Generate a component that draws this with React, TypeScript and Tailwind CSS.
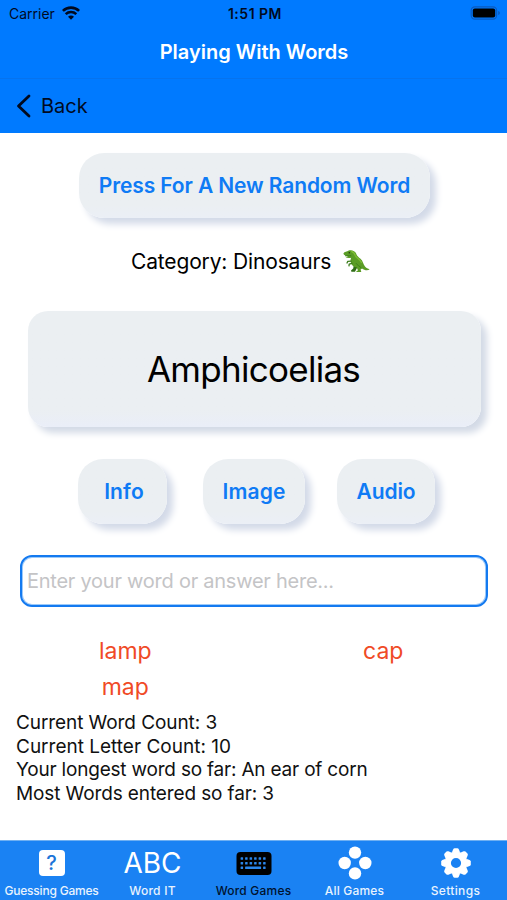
import type { ReactNode } from "react";

function WifiIcon() {
  return (
    <svg className="mb-[2px]" width="18" height="14" viewBox="0 0 18 14" fill="none" stroke="#000a1f" strokeWidth="2.6">
      <path d="M0.9 4.9C5.4 0.5 12.6 0.5 17.1 4.9" />
      <path d="M3.7 8.1C6.7 5.3 11.3 5.3 14.3 8.1" />
      <path d="M9 13.8 6 10.8C7.8 9.200 10.200 9.200 12 10.800Z" fill="#000a1f" stroke="none" />
    </svg>
  );
}

function BatteryIcon() {
  return (
    <svg className="mb-[2px]" width="31" height="14" viewBox="0 0 31 14">
      <rect x="1.2" y="0.8" width="25.4" height="12.4" rx="3.6" fill="none" stroke="#0a5bc0" strokeWidth="1.2" />
      <rect x="2.8" y="2.500" width="22.4" height="9" rx="2" fill="#000" />
      <path d="M28.200 5v4c1.100-.4 1.700-1.100 1.700-2s-.6-1.600-1.700-2Z" fill="#0a5bc0" />
    </svg>
  );
}

function TrexIcon() {
  return (
    <svg width="27" height="23" viewBox="0 0 27 23">
      <path d="M11 14.500 10.200 18.500 8 20.600 8.400 21.800H12L14.500 17Z" fill="#2f6d16" />
      <path
        d="M0.400 3.400C1.400 1.400 4 1.700 5.800 0.500C8.500-0.300 12.400 1 13.200 3.800C14 6 15.500 7.200 17.500 8.700C20 10.700 20.300 14.500 22 16.600C23.200 18.200 24.800 18.900 26.700 19.200C25 20.700 21.500 20.400 19 18.400L17.600 19.400 18.300 22H13.300L13.600 20.900 15 20.400 13.600 17.200C11.200 17.300 8.600 15.300 7.800 12.400C7.200 10.200 7.600 9 8.200 7.800C6 8.400 4 8.100 2.600 7.300L5.200 6.300C3.200 6.200 1 5.400 0.400 3.400Z"
        fill="#5a9c25"
      />
      <path d="M8.600 1.500C11 2 11.800 4 12.300 5.700C13.500 8.200 17 9 18.500 12.500" fill="none" stroke="#7dbb35" strokeWidth="1.300" strokeLinecap="round" />
      <path d="M8 11.200 4.800 11.400 4 13M9 13.300 6.200 14.200 6 15.800" fill="none" stroke="#3b7d1b" strokeWidth="1.300" strokeLinecap="round" strokeLinejoin="round" />
      <path d="M13.200 13.500C14.500 15.500 16.500 16 18 17.600M2.500 5.800 7.800 5.700" fill="none" stroke="#3b7d1b" strokeWidth="0.900" strokeLinecap="round" />
      <circle cx="6.300" cy="2.700" r="0.750" fill="#24330f" />
    </svg>
  );
}

function QuestionIcon() {
  return (
    <span className="flex h-[26px] w-[26px] items-center justify-center rounded-[4px] bg-white text-[20px] leading-none font-medium text-[#1a74d8]">
      ?
    </span>
  );
}

function KeyboardIcon() {
  const cols = [4.6, 9.1, 13.6, 18.1, 22.6, 27.1];
  return (
    <svg width="36" height="23" viewBox="0 0 36 23">
      <rect x="0.500" width="35" height="23" rx="4" fill="#000" />
      <g fill="#2a86ea">
        {[5.2, 9.9].map((y) => cols.map((x) => <rect key={`${x}-${y}`} x={x} y={y} width="2.5" height="2.5" rx="0.5" />))}
        <rect x="4.600" y="14.600" width="2.500" height="2.500" rx="0.5" />
        <rect x="9.100" y="14.600" width="16" height="2.500" rx="0.5" />
        <rect x="27.100" y="14.600" width="2.500" height="2.500" rx="0.5" />
      </g>
    </svg>
  );
}

function DotsIcon() {
  return (
    <svg width="34" height="34" viewBox="0 0 34 34" fill="#fff">
      <circle cx="17" cy="6.600" r="6.200" />
      <circle cx="6.700" cy="17" r="6.200" />
      <circle cx="27.300" cy="17" r="6.200" />
      <circle cx="17" cy="27.400" r="6.200" />
    </svg>
  );
}

function GearIcon() {
  const teeth = [0, 45, 90, 135, 180, 225, 270, 315];
  return (
    <svg width="30" height="30" viewBox="-15 -15 30 30" fill="#fff">
      <circle r="8.200" fill="none" stroke="#fff" strokeWidth="6.200" />
      {teeth.map((a) => (
        <path key={a} transform={`rotate(${a})`} d="M-4.200-10.300-2.900-13.600Q-2.400-14.800-1.400-14.800H1.400Q2.400-14.800 2.900-13.600L4.200-10.300Z" />
      ))}
    </svg>
  );
}

function SoftButton({ className, children }: { className: string; children: ReactNode }) {
  return (
    <button
      className={`flex h-[65px] items-center justify-center rounded-[25px] bg-linear-to-b from-[#ebeff2] from-80% to-[#ebeff6] text-[21px] leading-none font-semibold text-[#0f7bf5] shadow-[6px_6px_7px_#d3dae8] ${className}`}
    >
      {children}
    </button>
  );
}

function Tab({ label, className, children }: { label: string; className: string; children: ReactNode }) {
  return (
    <div className="flex w-[101px] shrink-0 flex-col items-center">
      <div className="flex h-[44px] items-center justify-center">{children}</div>
      <span className={`mt-px text-[12px] leading-[9px] font-medium whitespace-nowrap ${className}`}>{label}</span>
    </div>
  );
}

export default function App() {
  return (
    <div className="flex h-[900px] w-[507px] flex-col overflow-hidden bg-white font-[Inter,sans-serif] text-black">
      <header className="h-[133px] shrink-0 bg-[#007aff]">
        <div className="grid h-7 grid-cols-3 items-center pr-[6px] pl-[9px] text-[14px] leading-none text-[#000a1f]">
          <div className="flex items-center gap-[7px]">
            <span>Carrier</span>
            <WifiIcon />
          </div>
          <span className="text-center font-semibold tracking-[0.5px]">1:51 PM</span>
          <div className="flex justify-end">
            <BatteryIcon />
          </div>
        </div>
        <h1 className="h-[50px] pl-px text-center text-[20px] leading-[49px] font-semibold text-white">
          Playing With Words
        </h1>
        <div className="flex h-[55px] items-center gap-[10px] border-t border-[#0673ee] pl-4 text-[20px] leading-none text-[#000a1f]">
          <svg width="15" height="24" viewBox="0 0 15 24" fill="none" stroke="#000a1f" strokeWidth="2.800" strokeLinecap="round" strokeLinejoin="round">
            <path d="M13 2 2.500 12 13 22" />
          </svg>
          <span>Back</span>
        </div>
      </header>

      <main className="flex h-[707px] shrink-0 flex-col">
        <SoftButton className="mt-5 ml-[79px] w-[351px] tracking-[-0.120px]">Press For A New Random Word</SoftButton>

        <div className="mt-[31px] flex h-6 items-center pl-[131px] text-[21px] leading-none">
          <span className="w-[212px] tracking-[-0.150px]">Category: Dinosaurs</span>
          <TrexIcon />
        </div>

        <div className="mt-[38px] ml-7 flex h-[116px] w-[453px] items-center justify-center rounded-[20px] bg-linear-to-b from-[#ebeff2] from-85% to-[#eaeef8] pr-[2px] text-[35px] leading-none tracking-[-0.720px] shadow-[6px_6px_7px_#d3dae6]">
          Amphicoelias
        </div>

        <div className="mt-8 flex pl-[78px]">
          <SoftButton className="w-[89px] pl-[3px] tracking-[0.150px]">Info</SoftButton>
          <SoftButton className="ml-9 w-[102px] tracking-[0.150px]">Image</SoftButton>
          <SoftButton className="ml-8 w-[98px] tracking-[-0.100px]">Audio</SoftButton>
        </div>

        <input
          className="mt-[31px] ml-5 h-[52px] w-[468px] rounded-[12px] border-2 border-[#147af0] bg-white pl-[5px] text-[20px] tracking-[-0.250px] shadow-[inset_0_0_0_1px_#9ccafa] outline-none placeholder:text-[#c4c4c6]"
          placeholder="Enter your word or answer here..."
        />

        <div className="mt-[26px] grid grid-cols-2 text-center text-[23px] leading-[36px] text-[#f04a26]">
          <span className="pr-[3px]">lamp</span>
          <span className="pl-[6px]">cap</span>
          <span className="pr-[3px]">map</span>
        </div>

        <div className="mt-[6px] flex flex-col pl-4 text-[19px] leading-[23.600px] text-[#111]">
          <span className="tracking-[-0.080px]">Current Word Count: 3</span>
          <span>Current Letter Count: 10</span>
          <span className="tracking-[-0.200px]">Your longest word so far: An ear of corn</span>
          <span className="tracking-[-0.120px]">Most Words entered so far: 3</span>
        </div>
      </main>

      <nav className="flex h-[60px] shrink-0 border-t border-[#6fb0f2] bg-[#1a82f3] pl-px text-white">
        <Tab label="Guessing Games" className="tracking-[-0.200px] text-[#e8f3fe]">
          <QuestionIcon />
        </Tab>
        <Tab label="Word IT" className="tracking-[0.250px] text-[#e8f3fe]">
          <span className="text-[28px] leading-none">ABC</span>
        </Tab>
        <Tab label="Word Games" className="tracking-[0.200px] text-[#00122e]">
          <KeyboardIcon />
        </Tab>
        <Tab label="All Games" className="tracking-[0.200px] text-[#e8f3fe]">
          <DotsIcon />
        </Tab>
        <Tab label="Settings" className="tracking-[0.350px] text-[#e8f3fe]">
          <GearIcon />
        </Tab>
      </nav>
    </div>
  );
}
